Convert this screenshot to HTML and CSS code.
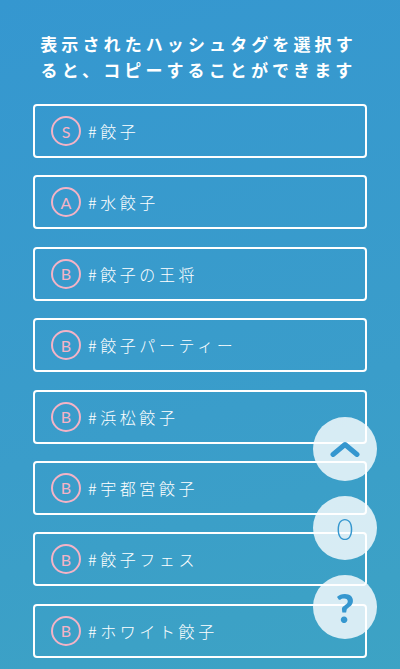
FILE: index.html
```html
<!DOCTYPE html>
<html lang="ja">
<head>
<meta charset="utf-8">
<link rel="stylesheet" href="styles.css">
</head>
<body>
<div class="page">
  <h1 class="title">表示されたハッシュタグを選択す<br>ると、コピーすることができます</h1>
  <ul class="list">
    <li class="card"><span class="rank">S</span><span class="tag">#餃子</span></li>
    <li class="card"><span class="rank">A</span><span class="tag">#水餃子</span></li>
    <li class="card"><span class="rank">B</span><span class="tag">#餃子の王将</span></li>
    <li class="card"><span class="rank">B</span><span class="tag">#餃子パーティー</span></li>
    <li class="card"><span class="rank">B</span><span class="tag">#浜松餃子</span></li>
    <li class="card"><span class="rank">B</span><span class="tag">#宇都宮餃子</span></li>
    <li class="card"><span class="rank">B</span><span class="tag">#餃子フェス</span></li>
    <li class="card"><span class="rank">B</span><span class="tag">#ホワイト餃子</span></li>
  </ul>
</div>
<div class="fabs">
  <button class="fab"><svg width="30" height="16" viewBox="0 0 30 16"><path d="M3 13.5 L15 3.5 L27 13.5" fill="none" stroke="#3597cf" stroke-width="5" stroke-linecap="round" stroke-linejoin="round"/></svg></button>
  <button class="fab count">0</button>
  <button class="fab help">?</button>
</div>
</body>
</html>
```
FILE: styles.css
```css
html, body {
  margin: 0;
  padding: 0;
}
body {
  width: 400px;
  min-height: 669px;
  background: linear-gradient(165deg, #3597d0 0%, #3a9dca 60%, #3da3c4 100%);
  font-family: "Noto Sans CJK JP", "Noto Sans", sans-serif;
  color: #fff;
  overflow: hidden;
}
.page {
  padding: 31px 33px 20px;
}
.title {
  margin: 0 0 21px;
  font-size: 17px;
  font-weight: 700;
  line-height: 26px;
  letter-spacing: 4.1px;
  text-align: center;
  white-space: nowrap;
  padding-right: 3px;
}
.list {
  list-style: none;
  margin: 0;
  padding: 0;
  display: flex;
  flex-direction: column;
  gap: 17.4px;
}
.card {
  box-sizing: border-box;
  height: 54px;
  border: 2px solid #fff;
  border-radius: 4px;
  display: flex;
  align-items: center;
  padding-left: 16px;
}
.rank {
  box-sizing: border-box;
  width: 30px;
  height: 30px;
  border: 2px solid #f4b3c6;
  border-radius: 50%;
  display: flex;
  align-items: center;
  justify-content: center;
  color: #f4b3c6;
  font-family: "Lato", "Noto Sans", sans-serif;
  font-size: 16px;
  font-weight: 400;
  margin-right: 7px;
}
.tag {
  font-size: 16px;
  font-weight: 300;
  letter-spacing: 3.6px;
  line-height: 1;
}
.fabs {
  position: fixed;
  right: 23px;
  bottom: 30px;
  display: flex;
  flex-direction: column;
  gap: 15px;
}
.fab {
  width: 64px;
  height: 64px;
  border: none;
  border-radius: 50%;
  background: rgba(255, 255, 255, 0.8);
  display: flex;
  align-items: center;
  justify-content: center;
  padding: 0;
  color: #3597cf;
  font-family: "Lato", "Noto Sans", sans-serif;
}
.count {
  font-size: 29px;
  font-weight: 300;
}
.help {
  font-size: 40px;
  font-weight: 900;
  padding-top: 2px;
}
```
